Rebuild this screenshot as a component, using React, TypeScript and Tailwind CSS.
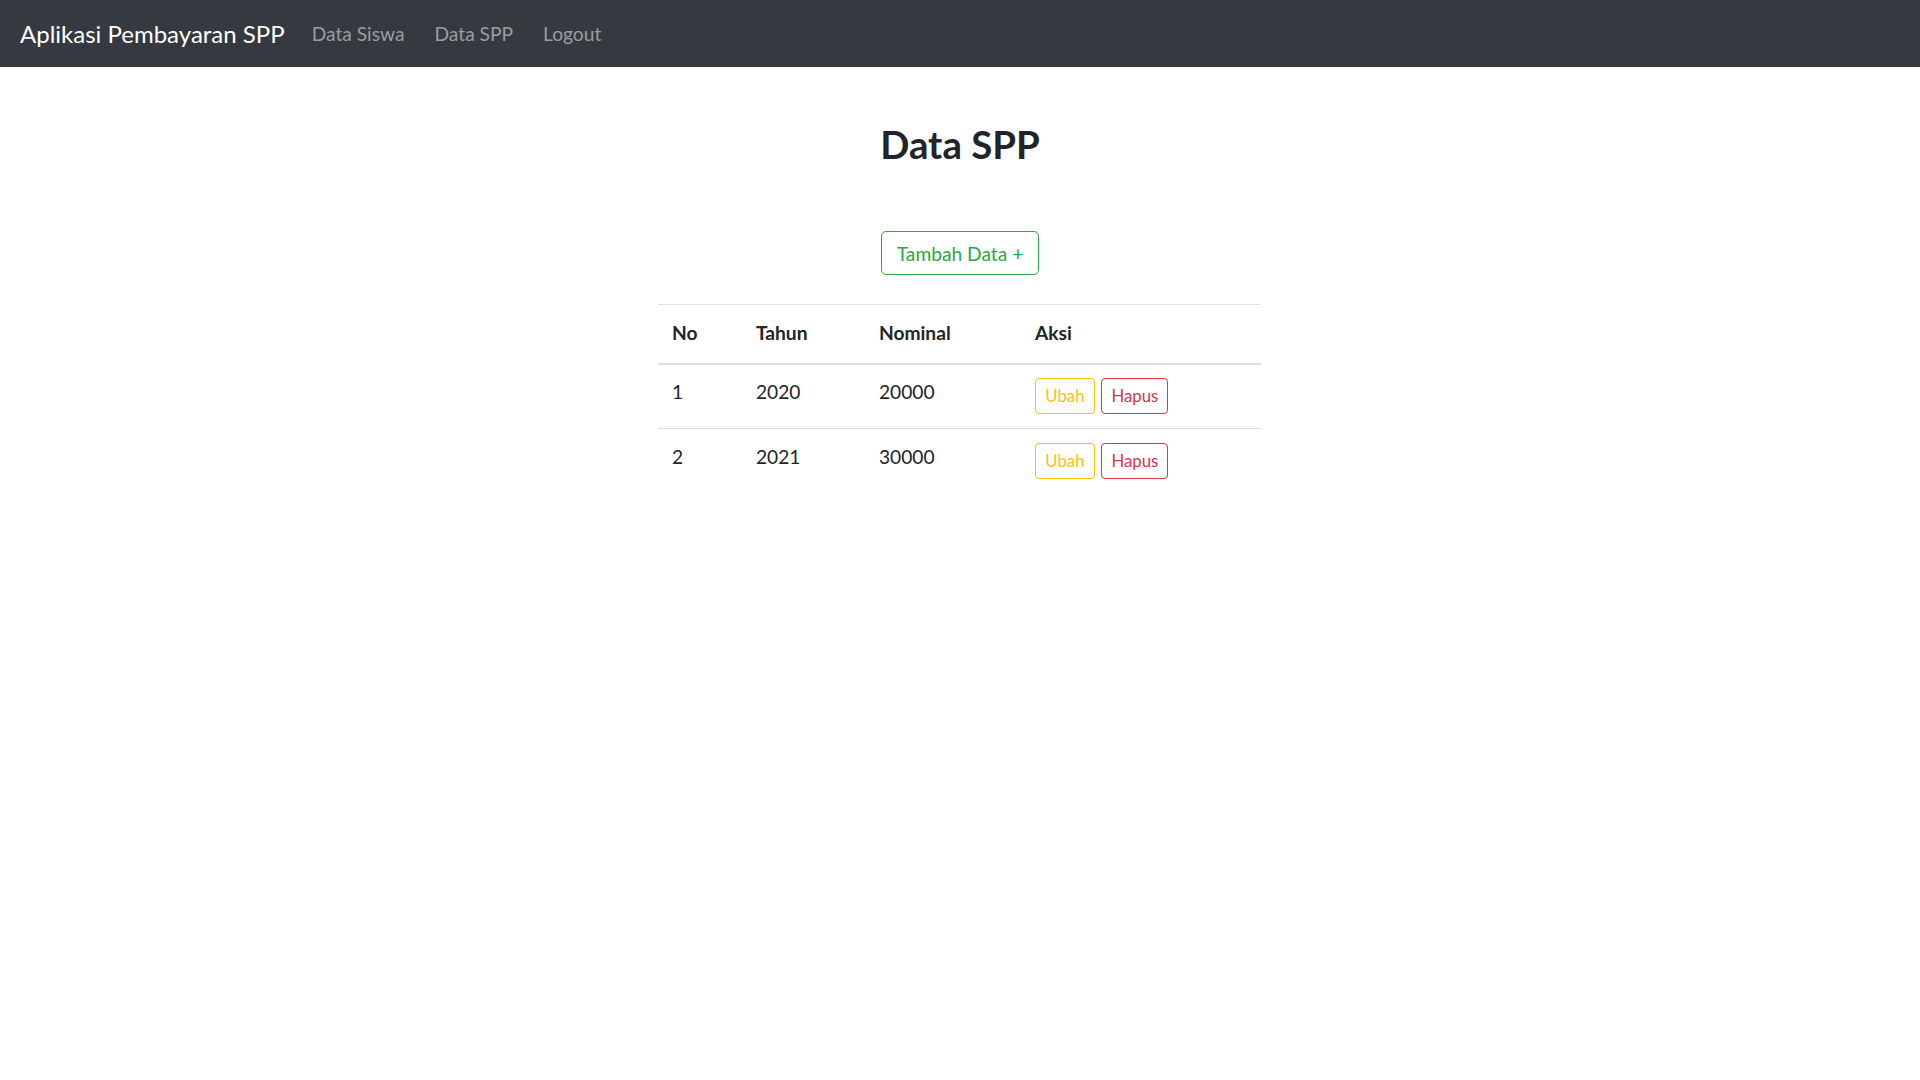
import React from 'react';

const rows = [
  { no: 1, tahun: 2020, nominal: 20000 },
  { no: 2, tahun: 2021, nominal: 30000 },
];

const Navbar = () => (
  <nav className="h-[67px] bg-[#343a40] flex items-center px-[20px]">
    <a className="text-[24px] leading-[36px] text-white mr-[12px]">Aplikasi Pembayaran SPP</a>
    <a className="text-[19.2px] leading-[29px] px-[15px] text-[#9a9da0]">Data Siswa</a>
    <a className="text-[19.2px] leading-[29px] px-[15px] text-[#9a9da0]">Data SPP</a>
    <a className="text-[19.2px] leading-[29px] px-[15px] text-[#9a9da0]">Logout</a>
  </nav>
);

export default function App() {
  return (
    <div className="min-h-screen bg-white text-[#212529] font-['Lato',sans-serif]">
      <Navbar />
      <main className="flex flex-col items-center">
        <h2 className="mt-[54px] text-[38.4px] leading-[46px] font-bold">Data SPP</h2>
        <button className="mt-[64px] border border-[#28a745] text-[#28a745] rounded-[5px] px-[14.4px] pt-[7.5px] pb-[6.5px] text-[19.2px] leading-[28px]">
          Tambah Data +
        </button>
        <table className="mt-[29px] mr-[2px] w-[603px] table-fixed text-left text-[19.2px] leading-[28.8px]">
          <colgroup>
            <col className="w-[84px]" />
            <col className="w-[123px]" />
            <col className="w-[156px]" />
            <col />
          </colgroup>
          <thead>
            <tr className="border-t border-[#dee2e6] border-b-2">
              <th className="p-[14.4px] font-bold">No</th>
              <th className="p-[14.4px] font-bold">Tahun</th>
              <th className="p-[14.4px] font-bold">Nominal</th>
              <th className="p-[14.4px] font-bold">Aksi</th>
            </tr>
          </thead>
          <tbody>
            {rows.map((r, i) => (
              <tr key={r.no} className={i > 0 ? 'border-t border-[#dee2e6]' : ''}>
                <td className="px-[14.4px] pt-[13.5px] pb-[14.4px] align-top">{r.no}</td>
                <td className="px-[14.4px] pt-[13.5px] pb-[14.4px] align-top">{r.tahun}</td>
                <td className="px-[14.4px] pt-[13.5px] pb-[14.4px] align-top">{r.nominal}</td>
                <td className="px-[14.4px] pt-[13.5px] pb-[14.4px] align-top">
                  <div className="flex gap-[6.5px]">
                    <button className="h-[36px] w-[60px] border border-[#ffc107] text-[#ffc107] rounded-[4px] text-[16.8px]">Ubah</button>
                    <button className="h-[36px] w-[67px] border border-[#dc3545] text-[#dc3545] rounded-[4px] text-[16.8px]">Hapus</button>
                  </div>
                </td>
              </tr>
            ))}
          </tbody>
        </table>
      </main>
    </div>
  );
}
